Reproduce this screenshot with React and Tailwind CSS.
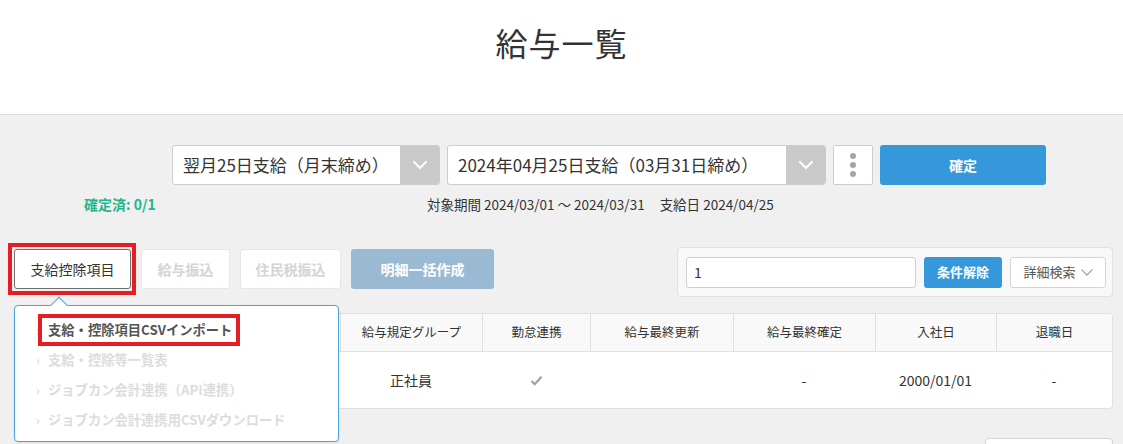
import React from "react";

const FONT = { fontFamily: '"Noto Sans CJK JP", "Noto Sans", sans-serif' };

function Chevron({ className = "", color = "#fff", w = 14, h = 8, sw = 2 }) {
  return (
    <svg width={w} height={h} viewBox="0 0 14 8" className={className}>
      <polyline points="1,1 7,7 13,1" fill="none" stroke={color} strokeWidth={sw} strokeLinecap="round" strokeLinejoin="round" />
    </svg>
  );
}

function Select({ text, width }) {
  return (
    <div className={`flex h-[40px] ${width} rounded-[3px] border border-[#ccc] bg-white overflow-hidden`}>
      <div className="flex-1 flex items-center pl-[10px] text-[17px] text-[#333]">{text}</div>
      <div className="w-[39px] bg-[#c9c9c9] flex items-center justify-center">
        <Chevron />
      </div>
    </div>
  );
}

export default function App() {
  const headers = ["", "", "給与規定グループ", "勤怠連携", "給与最終更新", "給与最終確定", "入社日", "退職日"];
  return (
    <div style={FONT} className="w-[1123px] h-[444px] overflow-hidden bg-[#f0f0f0] text-[#333]">
      {/* header */}
      <div className="h-[115px] bg-white border-b border-[#dcdcdc] flex justify-center pt-[20px]">
        <h1 className="text-[32px] leading-[44px] font-normal text-[#333] tracking-[1px]">給与一覧</h1>
      </div>

      {/* selectors */}
      <div className="pt-[30px] pl-[172px] flex gap-[7px] items-center">
        <Select text="翌月25日支給（月末締め）" width="w-[268px]" />
        <Select text="2024年04月25日支給（03月31日締め）" width="w-[379px]" />
        <div className="w-[40px] h-[40px] bg-white border border-[#ccc] rounded-[2px] flex flex-col items-center justify-center gap-[3px]">
          <span className="w-[6px] h-[6px] rounded-full bg-[#a5a5a5]" />
          <span className="w-[6px] h-[6px] rounded-full bg-[#a5a5a5]" />
          <span className="w-[6px] h-[6px] rounded-full bg-[#a5a5a5]" />
        </div>
        <button className="w-[166px] h-[40px] bg-[#3498db] rounded-[3px] text-white text-[14px] font-bold">確定</button>
      </div>

      {/* status line */}
      <div className="flex items-center h-[20px] mt-[9px]">
        <div className="ml-[84px] w-[343px] text-[14px] font-bold text-[#1fb68e]">確定済: 0/1</div>
        <div className="text-[13.5px] text-[#333]">対象期間 2024/03/01 〜 2024/03/31<span className="ml-[15px]">支給日 2024/04/25</span></div>
      </div>

      {/* action row */}
      <div className="flex items-start justify-between pl-[14px] pr-[10px] mt-[33px]">
        <div className="flex items-center gap-[10px] mt-[2px]">
          <div className="relative">
            <button className="h-[40px] w-[117px] bg-white border border-[#707070] rounded-[3px] text-[14px] text-[#333]">支給控除項目</button>
            <div className="absolute -left-[6px] -top-[6px] w-[128px] h-[52px] border-[4px] border-[#e51e25] pointer-events-none" />
          </div>
          <button className="h-[40px] w-[89px] bg-white border border-[#e6e6e6] rounded-[3px] text-[14px] font-bold text-[#d4d4d4]">給与振込</button>
          <button className="h-[40px] w-[101px] bg-white border border-[#e6e6e6] rounded-[3px] text-[14px] font-bold text-[#d4d4d4]">住民税振込</button>
          <button className="h-[40px] w-[143px] bg-[#9abad4] rounded-[3px] text-[14px] font-bold text-white">明細一括作成</button>
        </div>
        <div className="w-[436px] h-[50px] bg-[#f8f8f8] border border-[#e2e2e2] rounded-[4px] flex items-center pl-[8px] gap-[8px]">
          <div className="w-[230px] h-[31px] bg-white border border-[#cfcfcf] rounded-[3px] flex items-center pl-[7px] text-[14px] text-[#333]">1</div>
          <button className="w-[78px] h-[31px] bg-[#3498db] rounded-[3px] text-white text-[13px] font-bold">条件解除</button>
          <button className="w-[96px] h-[31px] bg-white border border-[#d5d5d5] rounded-[3px] text-[13px] text-[#555] flex items-center justify-center gap-[5px]">
            詳細検索
            <Chevron color="#999" w={12} h={7} sw={1.4} />
          </button>
        </div>
      </div>

      {/* table + dropdown */}
      <div className="relative mt-[16px] pl-[14px] pr-[10px]">
        <div className="bg-white border border-[#e0e0e0] rounded-[4px] overflow-hidden">
          <div className="grid grid-cols-[125px_200px_142px_108px_143px_142px_121px_1fr] h-[38px] bg-[#f9f9f9] border-b border-[#e0e0e0]">
            {headers.map((h, i) => (
              <div key={i} className={`flex items-center justify-center text-[12.5px] text-[#333] ${i > 0 ? "border-l border-[#e0e0e0]" : ""}`}>{h}</div>
            ))}
          </div>
          <div className="grid grid-cols-[125px_200px_142px_108px_143px_142px_121px_1fr] h-[56px] text-[14px] text-[#333]">
            <div />
            <div />
            <div className="flex items-center justify-center">正社員</div>
            <div className="flex items-center justify-center">
              <svg width="13" height="11" viewBox="0 0 13 11">
                <polyline points="1.5,6 4.8,9.2 11.5,1.8" fill="none" stroke="#a0a0a0" strokeWidth="2.2" />
              </svg>
            </div>
            <div />
            <div className="flex items-center justify-center">-</div>
            <div className="flex items-center justify-center">2000/01/01</div>
            <div className="flex items-center justify-center">-</div>
          </div>
        </div>

        <div className="flex justify-end mt-[29px]">
          <div className="w-[128px] h-[40px] bg-white border border-[#d5d5d5] rounded-[4px]" />
        </div>

        {/* dropdown popover */}
        <div className="absolute left-[14px] -top-[8px] w-[325px] h-[137px] bg-white border border-[#4aa3df] rounded-[4px] shadow-[0_1px_3px_rgba(0,0,0,0.08)]">
          <div className="absolute -top-[7px] left-[38px] w-[12px] h-[12px] bg-white border-l border-t border-[#4aa3df] rotate-45" />
          <div className="relative flex flex-col pt-[9px] pl-[21px] text-[13.3px] font-bold">
            <div className="h-[30px] flex items-center">
              <span className="w-[12px] text-[#ccc] text-[12px]">›</span>
              <span className="text-[#555]">支給・控除項目CSVインポート</span>
            </div>
            <div className="h-[30px] flex items-center text-[#dcdcdc]">
              <span className="w-[12px] text-[12px]">›</span>
              <span>支給・控除等一覧表</span>
            </div>
            <div className="h-[30px] flex items-center text-[#dcdcdc]">
              <span className="w-[12px] text-[12px]">›</span>
              <span>ジョブカン会計連携（API連携）</span>
            </div>
            <div className="h-[30px] flex items-center text-[#dcdcdc]">
              <span className="w-[12px] text-[12px]">›</span>
              <span>ジョブカン会計連携用CSVダウンロード</span>
            </div>
            <div className="absolute left-[23px] top-[8px] w-[202px] h-[32px] border-[4px] border-[#e51e25] pointer-events-none" />
          </div>
        </div>
      </div>
    </div>
  );
}
